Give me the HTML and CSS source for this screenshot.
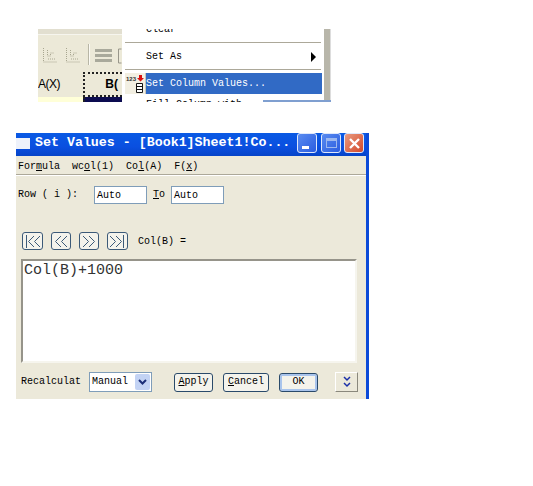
FILE: index.html
```html
<!doctype html>
<html>
<head>
<meta charset="utf-8">
<link rel="stylesheet" href="styles.css">
<title>Set Values</title>
</head>
<body>

    <div class="shot">
        <div class="sheet">
            <div class="toolbar">
                <div class="tool-dots"></div>
                <div class="tool-row">
                    <svg width="84" height="37" viewBox="0 0 84 37">
                        <path d="M5.500 13v14h14M9.500 15v6h3v-3h3M10 24h7M28.500 13v14h14M32.500 15v6h3v-3h3M33 24h7" fill="none" stroke="#a8a690" stroke-dasharray="1 1"/>
                        <path d="M50.500 9v21" stroke="#b8b6a6"/>
                        <path d="M51.500 9v21" stroke="#fbfaf4"/>
                        <path d="M57 14h17v3H57zM57 19h17v3H57zM57 24h17v3H57z" fill="#a9a99b"/>
                        <path d="M80.500 14v14M80.500 14h3M80.500 28h3" fill="none" stroke="#98968a"/>
                    </svg>
                </div>
            </div>
            <div class="col-heads">
                <div class="col-head col-a">A(X)</div>
                <div class="col-head col-b">B(</div>
            </div>
            <div class="cells">
                <div class="cell-a"></div>
                <div class="cell-b"></div>
            </div>
        </div>
        <div class="menu">
            <div class="menu-item clipped-top"><span>Clear</span></div>
            <div class="menu-sep"></div>
            <div class="menu-item set-as"><span>Set As</span><i class="arrow"></i></div>
            <div class="menu-sep"></div>
            <div class="menu-item active">
                <div class="menu-icon">
                    <svg width="20" height="21" viewBox="0 0 20 21">
                        <text x="1" y="8" class="icon-num">123</text>
                        <path d="M14 2h3v3h2l-3.500 3.500L12 5h2z" fill="#d81010"/>
                        <path d="M11.500 10.500h6v9h-6zM11.500 13.500h6M11.500 16.500h6" fill="#fff" stroke="#111"/>
                    </svg>
                </div>
                <div class="menu-label">Set Column Values...</div>
            </div>
            <div class="menu-item clipped-bottom"><span>Fill Column with</span></div>
        </div>
        <div class="menu-edge"></div>
        <div class="next-strip"></div>
    </div>

    <div class="window">
        <div class="titlebar">
            <i class="title-icon"></i>
            <div class="title-text">Set Values - [Book1]Sheet1!Co...</div>
            <div class="title-btn"><i class="min-bar"></i></div>
            <div class="title-btn maxi"><i class="max-box"></i></div>
            <div class="title-btn close">
                <svg width="13" height="13" viewBox="0 0 13 13"><path d="M2 2l9 9M11 2l-9 9" stroke="#fff" stroke-width="2.400"/></svg>
            </div>
        </div>
        <div class="menubar">
            <span>For<u>m</u>ula</span>
            <span>wc<u>o</u>l(1)</span>
            <span>Co<u>l</u>(A)</span>
            <span>F(<u>x</u>)</span>
        </div>
        <div class="row-line">
            <label class="row-label">Row ( i ):</label>
            <div class="field">Auto</div>
            <label class="to-label"><u>T</u>o</label>
            <div class="field">Auto</div>
        </div>
        <div class="nav-line">
            <button class="nav-btn wide">
                <svg width="17" height="13" viewBox="0 0 17 13"><path d="M2.500 0v13M10 1L4.500 6.500 10 12M16 1l-5.500 5.500L16 12" fill="none" stroke="#3c5a78"/></svg>
            </button>
            <button class="nav-btn">
                <svg width="14" height="13" viewBox="0 0 14 13"><path d="M7 1L1.500 6.500 7 12M13 1L7.500 6.500 13 12" fill="none" stroke="#3c5a78"/></svg>
            </button>
            <button class="nav-btn">
                <svg width="14" height="13" viewBox="0 0 14 13"><path d="M1 1l5.500 5.500L1 12M7 1l5.500 5.500L7 12" fill="none" stroke="#3c5a78"/></svg>
            </button>
            <button class="nav-btn wide">
                <svg width="17" height="13" viewBox="0 0 17 13"><path d="M1 1l5.500 5.500L1 12M7 1l5.500 5.500L7 12M14.500 0v13" fill="none" stroke="#3c5a78"/></svg>
            </button>
            <span class="col-label">Col(B) =</span>
        </div>
        <div class="formula">Col(B)+1000</div>
        <div class="bottom-line">
            <span class="recalc">Recalculat</span>
            <div class="select">
                <span>Manual</span>
                <div class="select-btn">
                    <svg width="9" height="6" viewBox="0 0 9 6"><path d="M1 1l3.500 3.500L8 1" fill="none" stroke="#1c2f78" stroke-width="2"/></svg>
                </div>
            </div>
            <button class="btn apply"><u>A</u>pply</button>
            <button class="btn cancel"><u>C</u>ancel</button>
            <button class="btn ok">OK</button>
            <button class="more">
                <svg width="8" height="12" viewBox="0 0 8 12"><path d="M1 1l3 3 3-3M1 7l3 3 3-3" fill="none" stroke="#1a2fa8" stroke-width="1.500"/></svg>
            </button>
        </div>
    </div>

</body>
</html>
```

FILE: styles.css
```css
html
{
    background:#fff;
}
body
{
    margin:0;
    padding-top:29px;
    font:normal normal 10px/14px "Liberation Mono", monospace;
    color:#000;
}
u
{
    text-decoration:underline;
}
button
{
    font:inherit;
    color:inherit;
    padding:0;
}

/* top picture: menu over the worksheet */
.shot
{
    position:relative;
    display:flex;
    width:293px;
    height:73px;
    margin-left:38px;
    overflow:hidden;
}
.next-strip
{
    position:absolute;
    right:0;
    bottom:0;
    width:68px;
    height:2px;
    background:#7f9fd0;
}
.sheet
{
    width:84px;
    display:flex;
    flex-direction:column;
}
.toolbar
{
    height:43px;
    background:#ece9d8;
}
.tool-dots
{
    height:5px;
    background:#e2dfd0;
    border-bottom:1px solid #f6f5ee;
}
.tool-row
{
    height:37px;
}
.tool-row svg
{
    display:block;
}
.col-heads
{
    display:flex;
    height:25px;
    font:normal normal 12px/25px "Liberation Sans", sans-serif;
    background:#ece9d8;
}
.col-head
{
    text-align:right;
}
.col-a
{
    width:23px;
    margin-right:22px;
    text-align:left;
    letter-spacing:-0.5px;
}
.col-b
{
    flex:1;
    line-height:21px;
    font-weight:bold;
    border:2px dotted #222;
    border-width:2px 0 2px 2px;
    padding-right:4px;
}
.cells
{
    display:flex;
    flex:1;
}
.cell-a
{
    width:45px;
    background:#ffffd8;
}
.cell-b
{
    flex:1;
    background:#0c0c50;
    border-left:2px dotted #222;
}
.menu
{
    width:203px;
    background:#fff;
}
.menu-item
{
    display:flex;
    align-items:center;
    justify-content:space-between;
    padding:0 8px 0 24px;
}
.clipped-top
{
    height:19px;
    margin-top:-6px;
    align-items:flex-start;
}
.menu-sep
{
    height:1px;
    margin:0 3px 0 3px;
    background:#aca899;
}
.set-as
{
    height:24px;
    padding-top:2px;
}
.arrow
{
    border-left:5px solid #000;
    border-top:5px solid transparent;
    border-bottom:5px solid transparent;
}
.active
{
    height:21px;
    padding:0;
    margin:3px 2px 0 3px;
    justify-content:flex-start;
}
.menu-icon
{
    width:20px;
    height:21px;
    background:#f2efe2;
    border-right:1px solid #c9c6b8;
}
.menu-icon svg
{
    display:block;
}
.icon-num
{
    font:bold 6px "Liberation Sans", sans-serif;
    fill:#333;
}
.menu-label
{
    flex:1;
    line-height:21px;
    background:#316ac5;
    color:#fff;
}
.clipped-bottom
{
    height:14px;
    padding-top:4px;
    align-items:flex-start;
}
.menu-edge
{
    width:6px;
    background:#b8b6aa;
    border-right:1px solid #ddd;
}

/* Set Values dialog */
.window
{
    width:350px;
    height:266px;
    margin:31px 0 0 16px;
    border-right:3px solid #0b4ad8;
    background:#ece9da;
    display:flex;
    flex-direction:column;
}
.titlebar
{
    height:23px;
    box-sizing:border-box;
    padding:0 2px 3px 0;
    display:flex;
    align-items:center;
    background:linear-gradient(#0a5ae4, #0a4fe0 60%, #0644c8);
    color:#fff;
}
.title-icon
{
    width:14px;
    height:11px;
    background:#eef2fb;
}
.title-text
{
    flex:1;
    margin-left:5px;
    font:bold 13.300px/20px "Liberation Mono", monospace;
    white-space:nowrap;
}
.title-btn
{
    width:20px;
    height:20px;
    box-sizing:border-box;
    border:1px solid #dfe8fb;
    border-radius:3px;
    background:linear-gradient(135deg, #5a8cf0, #2a5ce0);
    display:flex;
    align-items:center;
    justify-content:center;
}
.maxi
{
    margin-left:4px;
}
.min-bar
{
    width:7px;
    height:3px;
    margin-top:8px;
    margin-right:4px;
    background:#fff;
}
.max-box
{
    width:11px;
    height:10px;
    box-sizing:border-box;
    border:1px solid #9db8ee;
    border-top-width:3px;
}
.close
{
    margin-left:3px;
    background:linear-gradient(135deg, #e89a80, #d4492a);
}
.menubar
{
    height:20px;
    display:flex;
    align-items:center;
    gap:12px;
    padding:2px 0 0 2px;
    box-sizing:border-box;
    border-bottom:1px solid #fff;
    box-shadow:inset 0 -1px 0 #aca899;
}
.row-line
{
    display:flex;
    align-items:center;
    height:18px;
    margin-top:10px;
    padding-left:2px;
}
.row-label
{
    width:76px;
}
.to-label
{
    width:18px;
    margin-left:6px;
}
.field
{
    width:53px;
    height:18px;
    box-sizing:border-box;
    border:1px solid #7f9db9;
    background:#fff;
    padding-left:2px;
    line-height:17px;
}
.nav-line
{
    display:flex;
    align-items:center;
    height:18px;
    margin-top:28px;
    padding-left:6px;
}
.nav-btn
{
    width:20px;
    height:18px;
    margin-right:8px;
    box-sizing:border-box;
    border:1px solid #3c5a78;
    border-radius:3px;
    background:#f4f3ec;
    display:flex;
    align-items:center;
    justify-content:center;
}
.wide
{
    width:21px;
}
.col-label
{
    margin:2px 0 0 2px;
}
.formula
{
    width:336px;
    height:104px;
    box-sizing:border-box;
    margin:9px 0 0 5px;
    padding:1px 0 0 1px;
    border:2px solid #96948a;
    border-right-color:#f6f5ee;
    border-bottom-color:#f6f5ee;
    background:#fff;
    font:normal normal 15px/18px "Liberation Mono", monospace;
    color:#333;
}
.bottom-line
{
    display:flex;
    align-items:center;
    height:20px;
    margin-top:9px;
    padding-left:5px;
}
.recalc
{
    width:68px;
}
.select
{
    width:63px;
    height:20px;
    box-sizing:border-box;
    border:1px solid #7f9db9;
    background:#fff;
    display:flex;
    align-items:center;
    justify-content:space-between;
    padding:1px 1px 1px 2px;
}
.select-btn
{
    width:15px;
    height:16px;
    border-radius:2px;
    background:#c3d3f4;
    display:flex;
    align-items:center;
    justify-content:center;
}
.btn
{
    height:19px;
    box-sizing:border-box;
    border:1px solid #2a4a6a;
    border-radius:3px;
    background:#f4f3ec;
}
.apply
{
    width:39px;
    margin-left:22px;
}
.cancel
{
    width:46px;
    margin-left:10px;
}
.ok
{
    width:39px;
    margin-left:10px;
    box-shadow:inset 0 0 0 2px #a9c4ec;
}
.more
{
    width:23px;
    height:20px;
    margin-left:17px;
    box-sizing:border-box;
    border:1px solid;
    border-color:#fff #8a887c #8a887c #fff;
    background:#ece9da;
    display:flex;
    align-items:center;
    justify-content:center;
}
```
